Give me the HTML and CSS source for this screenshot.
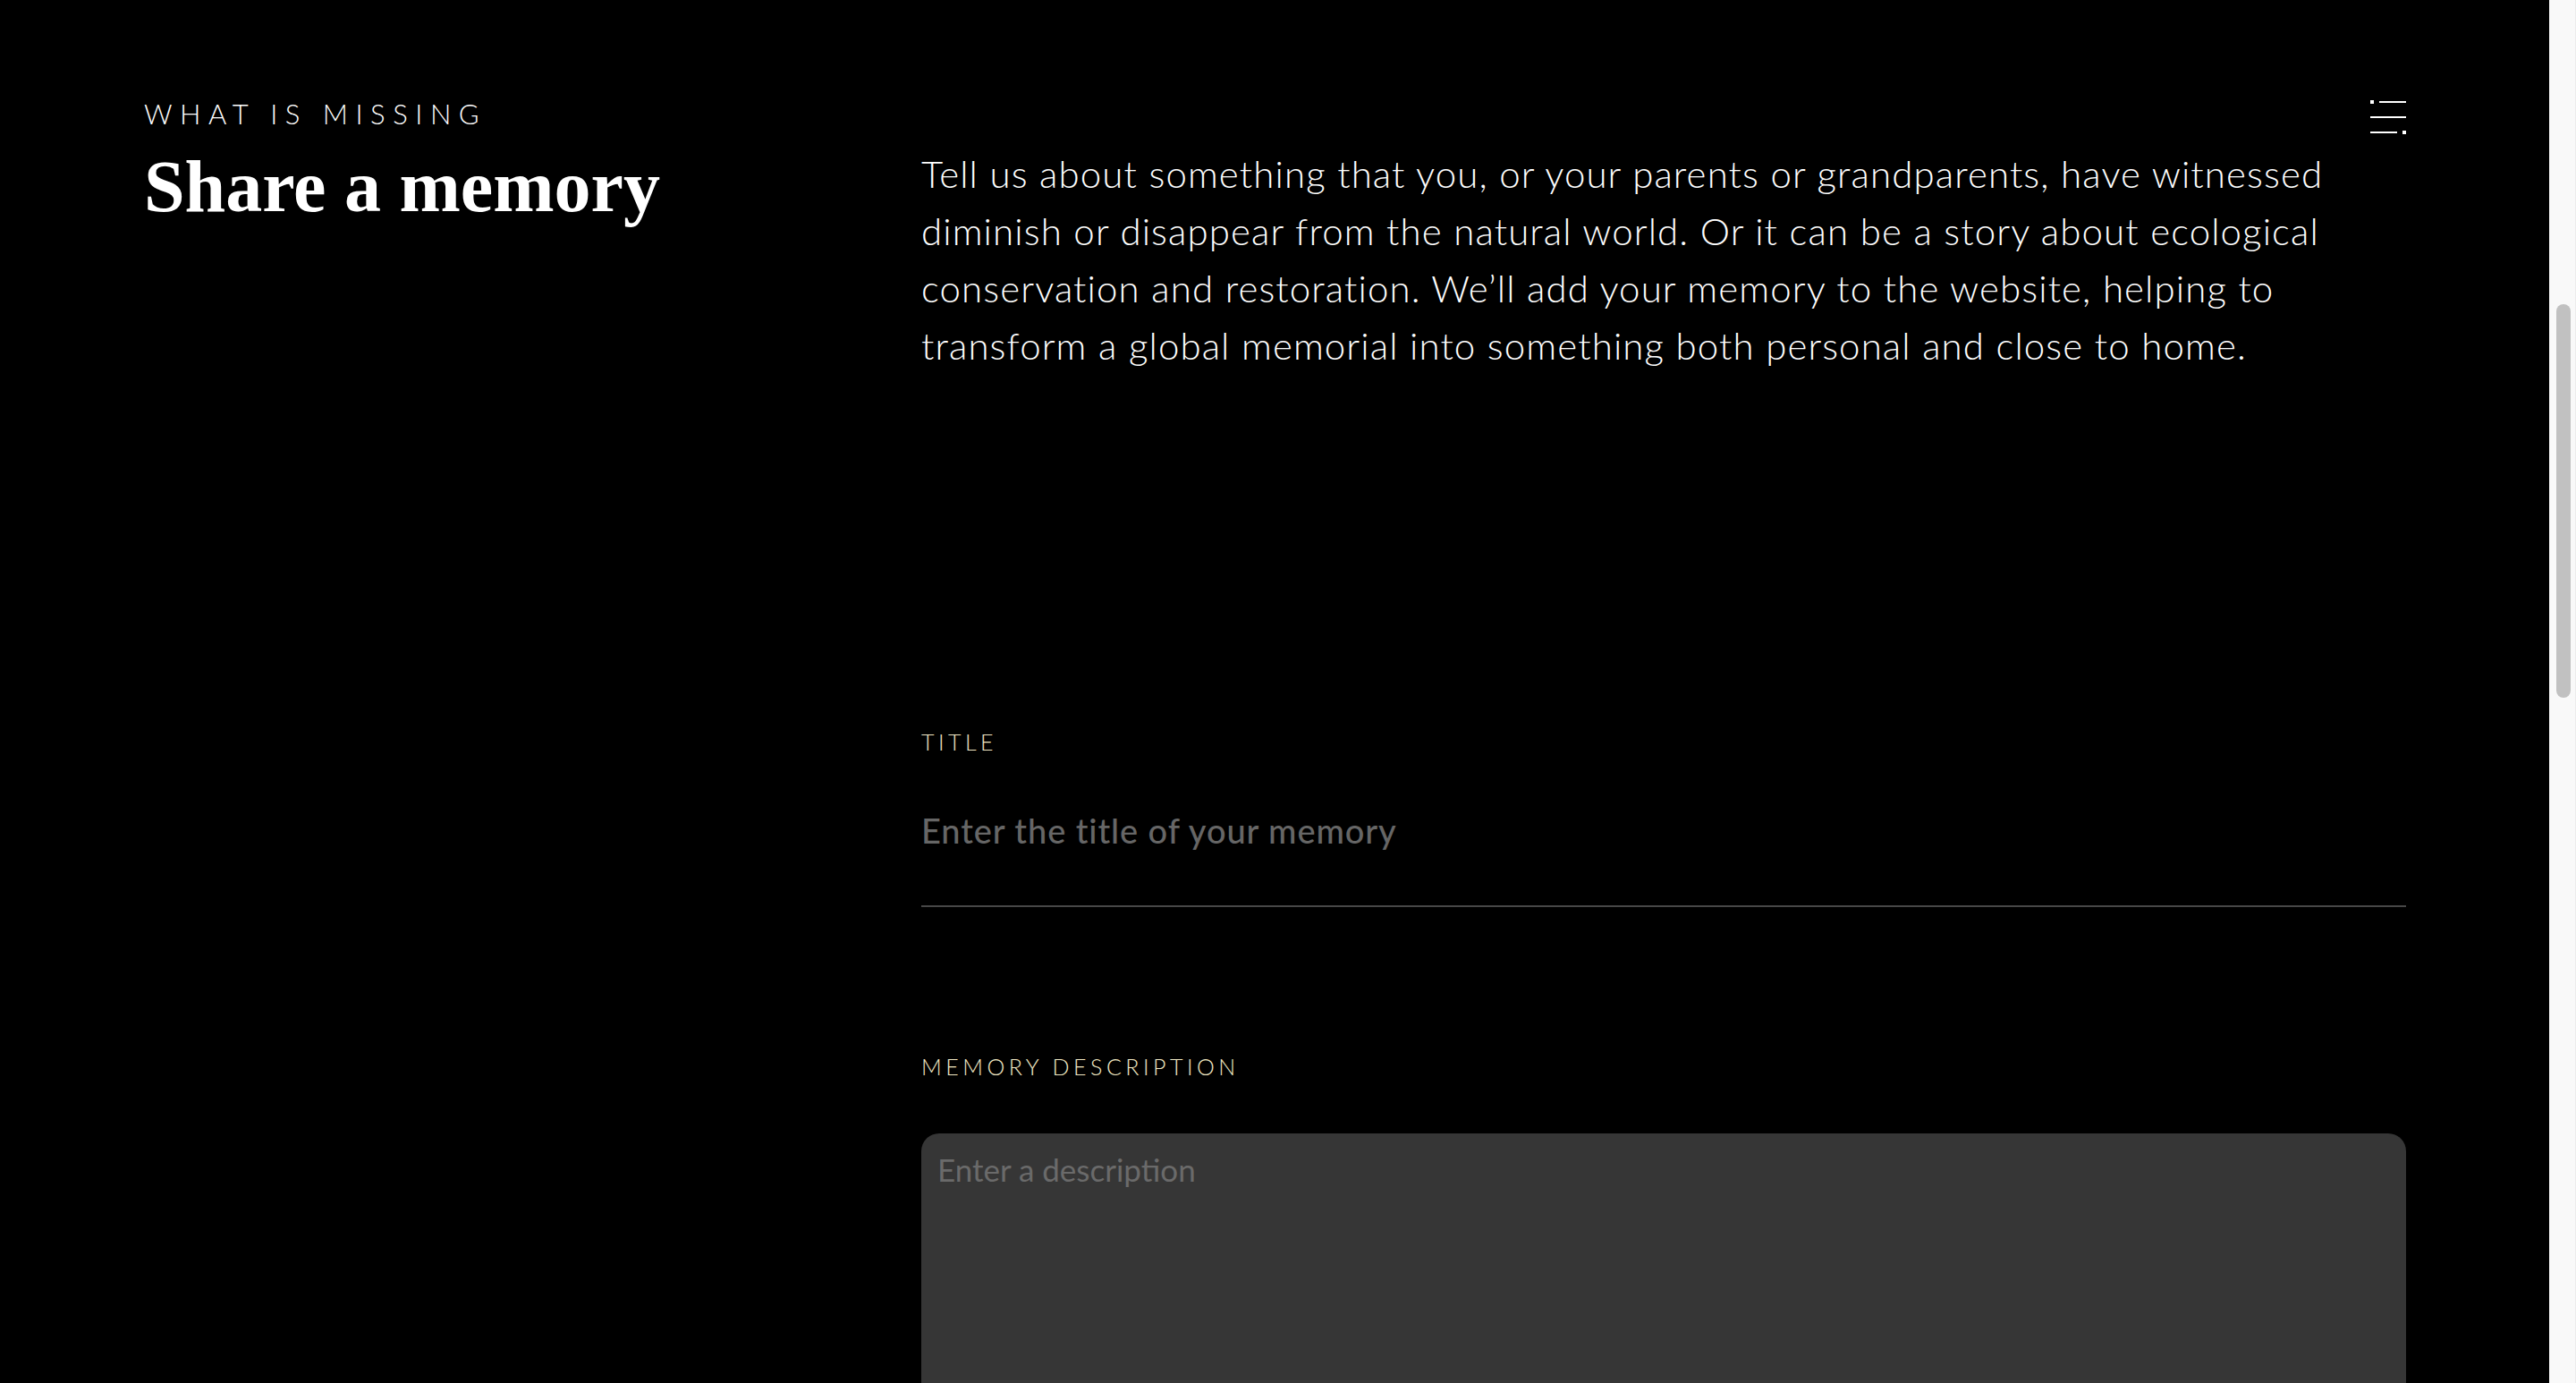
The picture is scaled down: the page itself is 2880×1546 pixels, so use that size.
FILE: index.html
```html
<!DOCTYPE html>
<html lang="en">
<head>
<meta charset="utf-8">
<title>Share a memory — What is Missing</title>
<link rel="stylesheet" href="styles.css">
</head>
<body>
<div class="page">
  <div class="intro">
    <p class="eyebrow">What is missing</p>
    <h1 class="heading">Share a memory</h1>
  </div>
  <div class="content">
    <div class="menu-row">
      <button class="menu-btn" aria-label="Menu">
        <svg width="40" height="38" viewBox="0 0 40 38" fill="#fff">
          <rect x="0" y="0" width="4" height="4"/>
          <rect x="10" y="1" width="30" height="2"/>
          <rect x="0" y="18" width="40" height="2"/>
          <rect x="0" y="35" width="30" height="2"/>
          <rect x="36" y="34" width="4" height="4"/>
        </svg>
      </button>
    </div>
    <p class="lead">Tell us about something that you, or your parents or grandparents, have witnessed diminish or disappear from the natural world. Or it can be a story about ecological conservation and restoration. We’ll add your memory to the website, helping to transform a global memorial into something both personal and close to home.</p>
    <form class="form">
      <div class="field field-title">
        <label class="label" for="title">Title</label>
        <input class="text-input" id="title" type="text" placeholder="Enter the title of your memory">
      </div>
      <div class="field field-desc">
        <label class="label" for="desc">Memory description</label>
        <textarea class="text-area" id="desc" placeholder="Enter a description"></textarea>
      </div>
    </form>
  </div>
</div>
<div class="scrollbar"><div class="scroll-thumb"></div></div>
</body>
</html>
```
FILE: styles.css
```css
html, body {
  margin: 0;
  height: 100%;
}
body {
  background: #000;
  color: #fff;
  font-family: "Lato", "Liberation Sans", sans-serif;
  display: flex;
  overflow: hidden;
}
.page {
  flex: 1;
  display: grid;
  grid-template-columns: 869px 1fr;
  align-items: start;
  padding: 109px 160px 0 161px;
}
.eyebrow {
  margin: 0;
  font-weight: 300;
  font-size: 31px;
  line-height: 1.2;
  letter-spacing: 0.275em;
  text-transform: uppercase;
}
.heading {
  margin: 18px 0 0;
  font-family: "Liberation Serif", serif;
  font-weight: 700;
  font-size: 82px;
  line-height: 1.1;
}
.menu-row {
  display: flex;
  justify-content: flex-end;
  margin-top: 3px;
}
.menu-btn {
  display: block;
  padding: 0;
  border: 0;
  background: none;
  width: 40px;
  height: 38px;
}
.menu-btn svg { display: block; }
.lead {
  margin: 12px 0 0;
  font-weight: 300;
  font-size: 42px;
  line-height: 64px;
  letter-spacing: 1.1px;
  color: #fff;
}
.form {
  margin-top: 396px;
}
.label {
  display: block;
  font-size: 25px;
  line-height: 30px;
  letter-spacing: 0.18em;
  text-transform: uppercase;
  color: #f2e9c4;
  font-weight: 300;
}
.text-input {
  display: block;
  box-sizing: border-box;
  width: 100%;
  margin-top: 62px;
  padding: 0 0 60px;
  border: 0;
  border-bottom: 2px solid #474747;
  background: transparent;
  color: #fff;
  font-family: "Lato", "Liberation Sans", sans-serif;
  font-weight: 500;
  font-size: 38px;
  line-height: 1.2;
  letter-spacing: 0.9px;
  outline: none;
}
.text-input::placeholder { color: #666; opacity: 1; }
.field-desc {
  margin-top: 163px;
}
.text-area {
  display: block;
  box-sizing: border-box;
  width: 100%;
  height: 600px;
  margin-top: 60px;
  padding: 19px 18px;
  border: 0;
  border-radius: 20px;
  background: #363636;
  color: #fff;
  font-family: "Lato", "Liberation Sans", sans-serif;
  font-size: 35px;
  line-height: 1.2;
  resize: none;
  outline: none;
}
.text-area::placeholder { color: #6a6a6a; opacity: 1; }
.scrollbar {
  width: 30px;
  flex: none;
  box-sizing: border-box;
  background: #f9f9f9;
  border-right: 1px solid #ececec;
  padding: 340px 5px 0 8px;
}
.scroll-thumb {
  height: 440px;
  border-radius: 8px;
  background: #c1c1c1;
}
```
